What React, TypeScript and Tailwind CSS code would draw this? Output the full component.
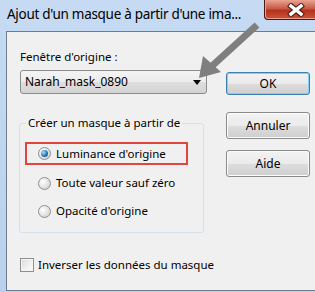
import React from "react";

const font = { fontFamily: '"Noto Sans", "Open Sans", sans-serif' };

function Radio({ checked }: { checked?: boolean }) {
  return (
    <span className="flex h-[13px] w-[13px] shrink-0 items-center justify-center rounded-full border border-[#8e8f8f] bg-[radial-gradient(circle_at_35%_35%,#ffffff,#d9d9d9_70%,#c4c4c4)]">
      {checked && (
        <span className="h-[7px] w-[7px] rounded-full bg-[radial-gradient(circle_at_35%_35%,#a6e0ff,#1b6fb5_60%,#0d3f75)]" />
      )}
    </span>
  );
}

function Button({ label, focused }: { label: string; focused?: boolean }) {
  return (
    <button
      type="button"
      className={
        "flex w-[84px] items-center justify-center rounded-[3px] border text-[12px] text-black bg-[linear-gradient(#f2f2f2,#ebebeb_50%,#dddddd_51%,#cfcfcf)] " +
        (focused
          ? "h-[23px] border-[#3c7fb1] shadow-[inset_0_0_0_1px_#7fd0f5]"
          : "h-[27px] border-[#8a8a8a] shadow-[inset_0_0_0_1px_#fcfcfc]")
      }
    >
      {label}
    </button>
  );
}

export default function App() {
  return (
    <div
      className="relative h-[292px] w-[315px] overflow-hidden bg-[linear-gradient(#c6dbf3,#b9d1ec)]"
      style={font}
    >
      {/* title bar */}
      <div className="flex h-[31px] w-[258px] items-center whitespace-nowrap pl-[7px] pb-[2px] text-[13.5px] tracking-[-0.3px] text-black">
        Ajout d'un masque à partir d'une ima...
      </div>
      <div className="absolute right-[-8px] top-0 flex h-[20px] w-[59px] items-center justify-center rounded-b-[4px] border border-t-0 border-[#4a1810] bg-[linear-gradient(#e8a493,#c75a45_45%,#b5321c_55%,#c9533c)] shadow-[inset_0_0_0_1px_#eaa08c]">
        <svg className="ml-[4px]" width="18" height="14" viewBox="0 0 18 14">
          <path d="M4 3L14 11M14 3L4 11" stroke="#4a1a10" strokeWidth="5.5" strokeLinecap="square" />
          <path d="M4 3L14 11M14 3L4 11" stroke="#ffffff" strokeWidth="3.5" strokeLinecap="square" />
        </svg>
      </div>

      {/* client area */}
      <div className="ml-[6px] h-[260px] w-[320px] border border-r-0 border-[#6e7c8c] bg-[#f0f0f0]">
        <div className="flex pt-[17px] pl-[13px]">
          <div className="flex w-[187px] flex-col text-[11.5px] text-black">
            <div className="leading-[16px]">Fenêtre d'origine :</div>
            <div className="mt-[5px] flex h-[24px] w-[187px] items-center justify-between rounded-[3px] border border-[#8c8c8c] bg-[linear-gradient(#f4f4f4,#ececec_50%,#dedede_51%,#d4d4d4)] pl-[4px] pr-[5px] text-[12px]">
              <span>Narah_mask_0890</span>
              <svg width="8" height="5" viewBox="0 0 8 5">
                <path d="M0 0H8L4 5Z" fill="#000" />
              </svg>
            </div>

            <fieldset className="mt-[21px] ml-[-1px] h-[118px] w-[185px] rounded-[3px] border border-[#d5dfe5]">
              <legend className="ml-[6px] px-[2px] leading-[16px]">
                Créer un masque à partir de
              </legend>
              <div className="ml-[5px] mt-[11px] flex h-[23px] w-[163px] items-center gap-[5px] border-2 border-[#e0463e] pl-[11px]">
                <Radio checked />
                <span>Luminance d'origine</span>
              </div>
              <div className="ml-[18px] mt-[10px] flex h-[16px] items-center gap-[5px]">
                <Radio />
                <span>Toute valeur sauf zéro</span>
              </div>
              <div className="ml-[18px] mt-[12px] flex h-[16px] items-center gap-[5px]">
                <Radio />
                <span>Opacité d'origine</span>
              </div>
            </fieldset>

            <div className="mt-[23px] flex items-center gap-[4px] whitespace-nowrap">
              <span className="h-[14px] w-[14px] shrink-0 border border-[#8e8f8f] bg-[linear-gradient(135deg,#dcdcdc,#ffffff)] shadow-[inset_0_0_0_1px_#f4f4f4]" />
              <span>Inverser les données du masque</span>
            </div>
          </div>

          <div className="ml-[19px] mt-[23px] flex flex-col">
            <Button label="OK" focused />
            <div className="mt-[17px]">
              <Button label="Annuler" />
            </div>
            <div className="mt-[11px]">
              <Button label="Aide" />
            </div>
          </div>
        </div>
      </div>

      {/* annotation arrow */}
      <svg
        className="pointer-events-none absolute left-0 top-0"
        width="315"
        height="292"
        viewBox="0 0 315 292"
      >
        <line x1="257" y1="25" x2="212" y2="66" stroke="#7f7f7f" strokeWidth="7" />
        <path d="M199 78L203 56L221 72Z" fill="#7f7f7f" />
      </svg>
    </div>
  );
}
